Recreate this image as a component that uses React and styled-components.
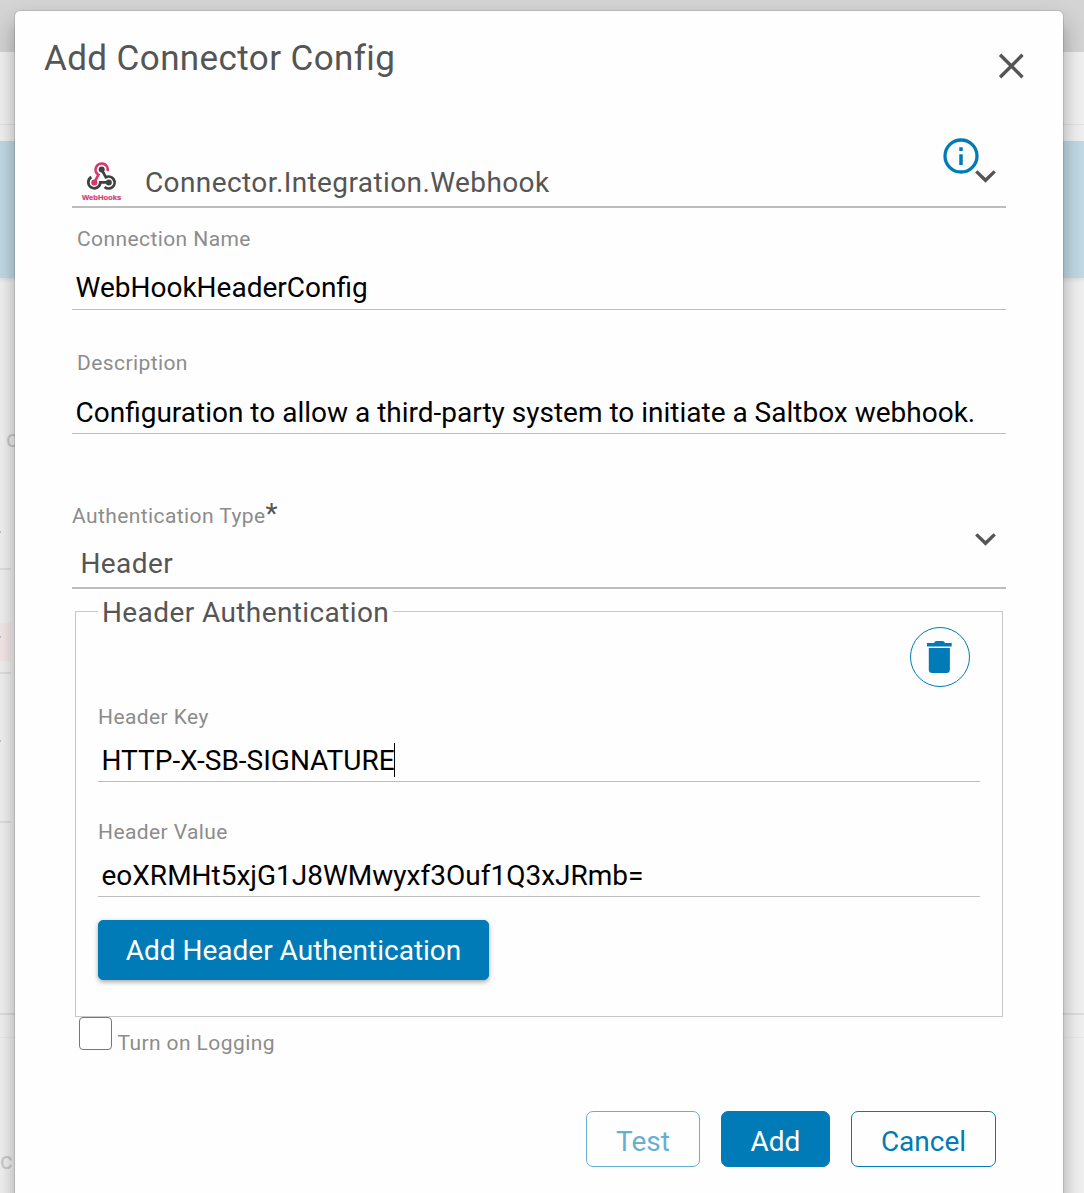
import styled, { createGlobalStyle, css } from "styled-components";
import { useState } from "react";

const GlobalStyle = createGlobalStyle`
  *, *::before, *::after {
    box-sizing: border-box;
  }

  body {
    margin: 0;
    height: 1193px;
    overflow: hidden;
    background: #f0f0f0;
    font-family: Roboto, "Liberation Sans", sans-serif;
    color: #555;
  }
`;

/* Dimmed page behind the dialog */

const Page = styled.div`
  display: flex;
  flex-direction: column;
  height: 1193px;
  overflow: hidden;
  background: #f1f1f1;
`;

const TopBar = styled.div`
  height: 52px;
  background: #d4d4d4;
`;

const Toolbar = styled.div`
  height: 73px;
  border-bottom: 1px solid #e2e2e2;
`;

const Banner = styled.div`
  height: 137px;
  margin-top: 16px;
  background: #c1dae5;
  box-shadow: 0 2px 4px rgba(0, 0, 0, 0.08);
`;

const PageCard = styled.div`
  height: 737px;
  border-bottom: 2px solid #dedede;
  padding-top: 147px;
`;

const PageRow = styled.div`
  display: flex;
  flex-direction: column;
  width: 11px;
  height: ${(props) => props.$height}px;
  padding-top: ${(props) => props.$top || 0}px;
  border-bottom: 2px solid #dfdfdf;
`;

const PageText = styled.div`
  width: 30px;
  margin-top: ${(props) => props.$top || 0}px;
  padding-left: ${(props) => props.$indent || 0}px;
  font-size: 24px;
  line-height: 28px;
  color: #cacaca;
`;

const Alert = styled.div`
  height: 38px;
  padding-top: 13px;
  background: #f4e8e8;
`;

const Dot = styled.div`
  width: 1px;
  height: 2px;
  background: #b9c0cc;
`;

const Strip = styled.div`
  height: 23px;
  border-bottom: 1px solid #eaeaea;
`;

/* Dialog */

const Dialog = styled.div`
  position: absolute;
  top: 11px;
  left: 15px;
  width: 1048px;
  height: 1240px;
  padding: 27px 57px 0;
  background: #fefefe;
  border-radius: 5px;
  box-shadow: 0 0 0 1px rgba(0, 0, 0, 0.1), 0 11px 15px -7px rgba(0, 0, 0, 0.2),
    0 14px 20px 1px rgba(0, 0, 0, 0.16), 0 9px 26px 2px rgba(0, 0, 0, 0.1);
`;

const Header = styled.header`
  display: flex;
  justify-content: space-between;
  height: 107px;
  margin: 0 -18px 0 -28px;
`;

const Title = styled.h1`
  margin: 1px 0 0;
  font-size: 35px;
  font-weight: 400;
  line-height: 40px;
  letter-spacing: 0.4px;
`;

const IconButton = styled.button`
  display: flex;
  padding: 0;
  border: none;
  background: none;
  color: #555;
  height: 26px;
  margin-top: 15px;
`;

const Form = styled.form`
  display: flex;
  flex-direction: column;
  width: 934px;
`;

const Select = styled.div`
  display: flex;
  justify-content: space-between;
  height: ${(props) => props.$height}px;
  border-bottom: 2px solid #bdbdbd;
`;

const SelectValue = styled.div`
  display: flex;
  align-items: flex-start;
  padding: ${(props) => props.$top || 0}px 0 0 ${(props) => props.$left}px;
  font-size: 28px;
  line-height: 32px;
  letter-spacing: 0.4px;
`;

const SelectIcons = styled.div`
  display: flex;
  align-items: flex-start;
  padding-right: 10px;
`;

const InfoIcon = styled.svg`
  margin: -7px -4px 0 0;
`;

const Chevron = styled.svg`
  margin-top: ${(props) => props.$top}px;
`;

const Logo = styled.svg`
  margin: 16px 23px 0 0;
`;

const ConnectorName = styled.span`
  margin-top: 22px;
`;

const Field = styled.label`
  display: flex;
  flex-direction: column;
  padding-top: ${(props) => props.$top}px;
`;

const Label = styled.span`
  font-size: 21px;
  line-height: 26px;
  letter-spacing: 0.41px;
  color: #8c8c8c;
  padding-left: ${(props) => props.$indent || 0}px;
`;

const Required = styled.sup`
  font-size: 28px;
  line-height: 0;
  vertical-align: 0;
  color: #555;
`;

const Input = styled.input`
  width: 100%;
  height: ${(props) => props.$height}px;
  padding: ${(props) => props.$top}px 0 0 3.5px;
  border: none;
  border-bottom: 1px solid #bdbdbd;
  border-radius: 0;
  outline: none;
  background: none;
  font-family: inherit;
  font-size: 28px;
  color: #000;
`;

const InputBox = styled.div`
  position: relative;
  display: flex;
`;

const Caret = styled.span`
  position: absolute;
  left: 296px;
  bottom: 5px;
  width: 1px;
  height: 34px;
  background: #000;
`;

const Group = styled.fieldset`
  width: 928px;
  height: 421px;
  margin: 7px 3px 0;
  padding: 0 22px;
  border: 1px solid #c8c8c8;
`;

const Legend = styled.legend`
  margin: 0;
  padding: 3px 4px 0;
  font-size: 28px;
  line-height: 28px;
  letter-spacing: 0.4px;
`;

const DeleteButton = styled.button`
  display: flex;
  align-items: center;
  justify-content: center;
  width: 60px;
  height: 60px;
  margin: 0 10px 0 auto;
  padding: 0;
  border: 1px solid #007bb8;
  border-radius: 50%;
  background: none;
  color: #007bb8;
`;

const variants = {
  filled: css`
    background: #007bb8;
    color: #fff;
  `,
  outlined: css`
    background: none;
    color: #007bb8;
  `,
};

const Button = styled.button`
  width: ${(props) => props.$width}px;
  height: 56px;
  padding: 6px 0 0;
  border: 1px solid #007bb8;
  border-radius: 7px;
  font-family: inherit;
  font-size: 28px;
  font-weight: 400;
  line-height: 32px;
  ${(props) => variants[props.$variant]}

  &:disabled {
    opacity: 0.6;
  }
`;

const AddHeaderButton = styled(Button)`
  height: 60px;
  margin-top: 23px;
  padding: 2px 0 0;
  border-radius: 5px;
  box-shadow: 0 2px 5px rgba(0, 0, 0, 0.35);
`;

const CheckboxRow = styled.label`
  display: flex;
  gap: 5.5px;
  padding-left: 7px;
`;

const Checkbox = styled.input`
  appearance: none;
  width: 33px;
  height: 33px;
  margin: 0;
  border: 1px solid #767676;
  border-radius: 4px;
  background: #fff;
`;

const CheckboxLabel = styled(Label)`
  margin-top: 13px;
`;

const Footer = styled.footer`
  display: flex;
  justify-content: flex-end;
  gap: 21px;
  margin-top: 55px;
  padding-right: 10px;
`;

function WebhooksLogo() {
  return (
    <Logo width="41" height="41" viewBox="0 0 41 41" fill="none">
      <g strokeWidth="2.7">
        <path
          d="M13.5 21.2L17.4 13.8A6.1 6.1 0 1 1 26.6 10"
          stroke="#d6396b"
        />
        <path
          d="M20.7 8.6L24.8 16.2A6 6 0 1 1 23.6 26"
          stroke="#404040"
        />
        <path
          d="M27.8 21.4H19.3A6 6 0 1 1 10.4 16"
          stroke="#404040"
        />
      </g>
      <circle cx="20.7" cy="8.6" r="3" fill="#404040" />
      <circle cx="13.3" cy="21.5" r="3.1" fill="#d6396b" />
      <circle cx="27.8" cy="21.4" r="3" fill="#404040" />
      <text
        x="0.9"
        y="38.9"
        textLength="39.4"
        lengthAdjust="spacingAndGlyphs"
        fontFamily="Liberation Sans, sans-serif"
        fontSize="8"
        fontWeight="700"
        letterSpacing="0"
        stroke="#d6396b"
        strokeWidth="0.2"
        fill="#d6396b"
      >
        WebHooks
      </text>
    </Logo>
  );
}

function ChevronDown({ top }) {
  return (
    <Chevron $top={top} width="21" height="13" viewBox="0 0 21 13" fill="none">
      <path d="M1.3 1.4L10.5 10.3L19.7 1.4" stroke="#555" strokeWidth="3.4" />
    </Chevron>
  );
}

function App() {
  const [name, setName] = useState("WebHookHeaderConfig");
  const [description, setDescription] = useState(
    "Configuration to allow a third-party system to initiate a Saltbox webhook."
  );
  const [headerKey, setHeaderKey] = useState("HTTP-X-SB-SIGNATURE");
  const [headerValue, setHeaderValue] = useState(
    "eoXRMHt5xjG1J8WMwyxf3Ouf1Q3xJRmb="
  );
  const [logging, setLogging] = useState(false);

  return (
    <>
      <GlobalStyle />
      <Page>
        <TopBar />
        <Toolbar />
        <Banner />
        <PageCard>
          <PageText $indent={6}>c</PageText>
          <PageRow $height={117} $top={78}>
            <Dot />
          </PageRow>
          <PageRow $height={104} $top={53}>
            <Alert>
              <Dot />
            </Alert>
          </PageRow>
          <PageRow $height={149} $top={66}>
            <Dot />
          </PageRow>
        </PageCard>
        <Strip />
        <PageText $top={109}>c</PageText>
      </Page>

      <Dialog role="dialog">
        <Header>
          <Title>Add Connector Config</Title>
          <IconButton type="button" aria-label="Close">
            <svg width="26" height="26" viewBox="0 0 26 26" fill="none">
              <path
                d="M2.1 1.8L24.5 24.2M24.5 1.8L2.1 24.2"
                stroke="currentColor"
                strokeWidth="3.4"
              />
            </svg>
          </IconButton>
        </Header>

        <Form onSubmit={(e) => e.preventDefault()}>
          <Select $height={63}>
            <SelectValue $left={9}>
              <WebhooksLogo />
              <ConnectorName>Connector.Integration.Webhook</ConnectorName>
            </SelectValue>
            <SelectIcons>
              <InfoIcon width="36" height="36" viewBox="0 0 36 36" fill="none">
                <circle cx="18" cy="18" r="16" stroke="#007bb8" strokeWidth="3.3" />
                <path d="M18 9.3V13M18 16.3V27" stroke="#007bb8" strokeWidth="3.5" />
              </InfoIcon>
              <ChevronDown top={25} />
            </SelectIcons>
          </Select>

          <Field $top={18}>
            <Label $indent={5}>Connection Name</Label>
            <Input
              $height={58}
              $top={14}
              value={name}
              onChange={(e) => setName(e.target.value)}
            />
          </Field>

          <Field $top={40}>
            <Label $indent={5}>Description</Label>
            <Input
              $height={58}
              $top={15}
              value={description}
              onChange={(e) => setDescription(e.target.value)}
            />
          </Field>

          <Field as="div" $top={69}>
            <Label>
              Authentication Type<Required>*</Required>
            </Label>
            <Select $height={60}>
              <SelectValue $top={19} $left={8.5}>
                Header
              </SelectValue>
              <SelectIcons>
                <ChevronDown top={4} />
              </SelectIcons>
            </Select>
          </Field>

          <Group>
            <Legend>Header Authentication</Legend>
            <DeleteButton type="button" aria-label="Delete header">
              <svg width="26" height="32" viewBox="0 0 26 32" fill="currentColor">
                <path d="M7 2Q7.5 0 9.5 0H15.5Q17.5 0 18 2H24.7V5.5H0V2Z" />
                <path d="M1.8 7H22.9V28.5Q22.9 32 19.5 32H5.2Q1.8 32 1.8 28.5Z" />
              </svg>
            </DeleteButton>

            <Field $top={17}>
              <Label>Header Key</Label>
              <InputBox>
                <Input
                  $height={52}
                  $top={9}
                  value={headerKey}
                  onChange={(e) => setHeaderKey(e.target.value)}
                />
                <Caret />
              </InputBox>
            </Field>

            <Field $top={37}>
              <Label>Header Value</Label>
              <Input
                $height={52}
                $top={9}
                value={headerValue}
                onChange={(e) => setHeaderValue(e.target.value)}
              />
            </Field>

            <AddHeaderButton type="button" $variant="filled" $width={391}>
              Add Header Authentication
            </AddHeaderButton>
          </Group>

          <CheckboxRow>
            <Checkbox
              type="checkbox"
              checked={logging}
              onChange={(e) => setLogging(e.target.checked)}
            />
            <CheckboxLabel>Turn on Logging</CheckboxLabel>
          </CheckboxRow>

          <Footer>
            <Button type="button" $variant="outlined" $width={114} disabled>
              Test
            </Button>
            <Button type="submit" $variant="filled" $width={109}>
              Add
            </Button>
            <Button type="button" $variant="outlined" $width={145}>
              Cancel
            </Button>
          </Footer>
        </Form>
      </Dialog>
    </>
  );
}

export default App;
